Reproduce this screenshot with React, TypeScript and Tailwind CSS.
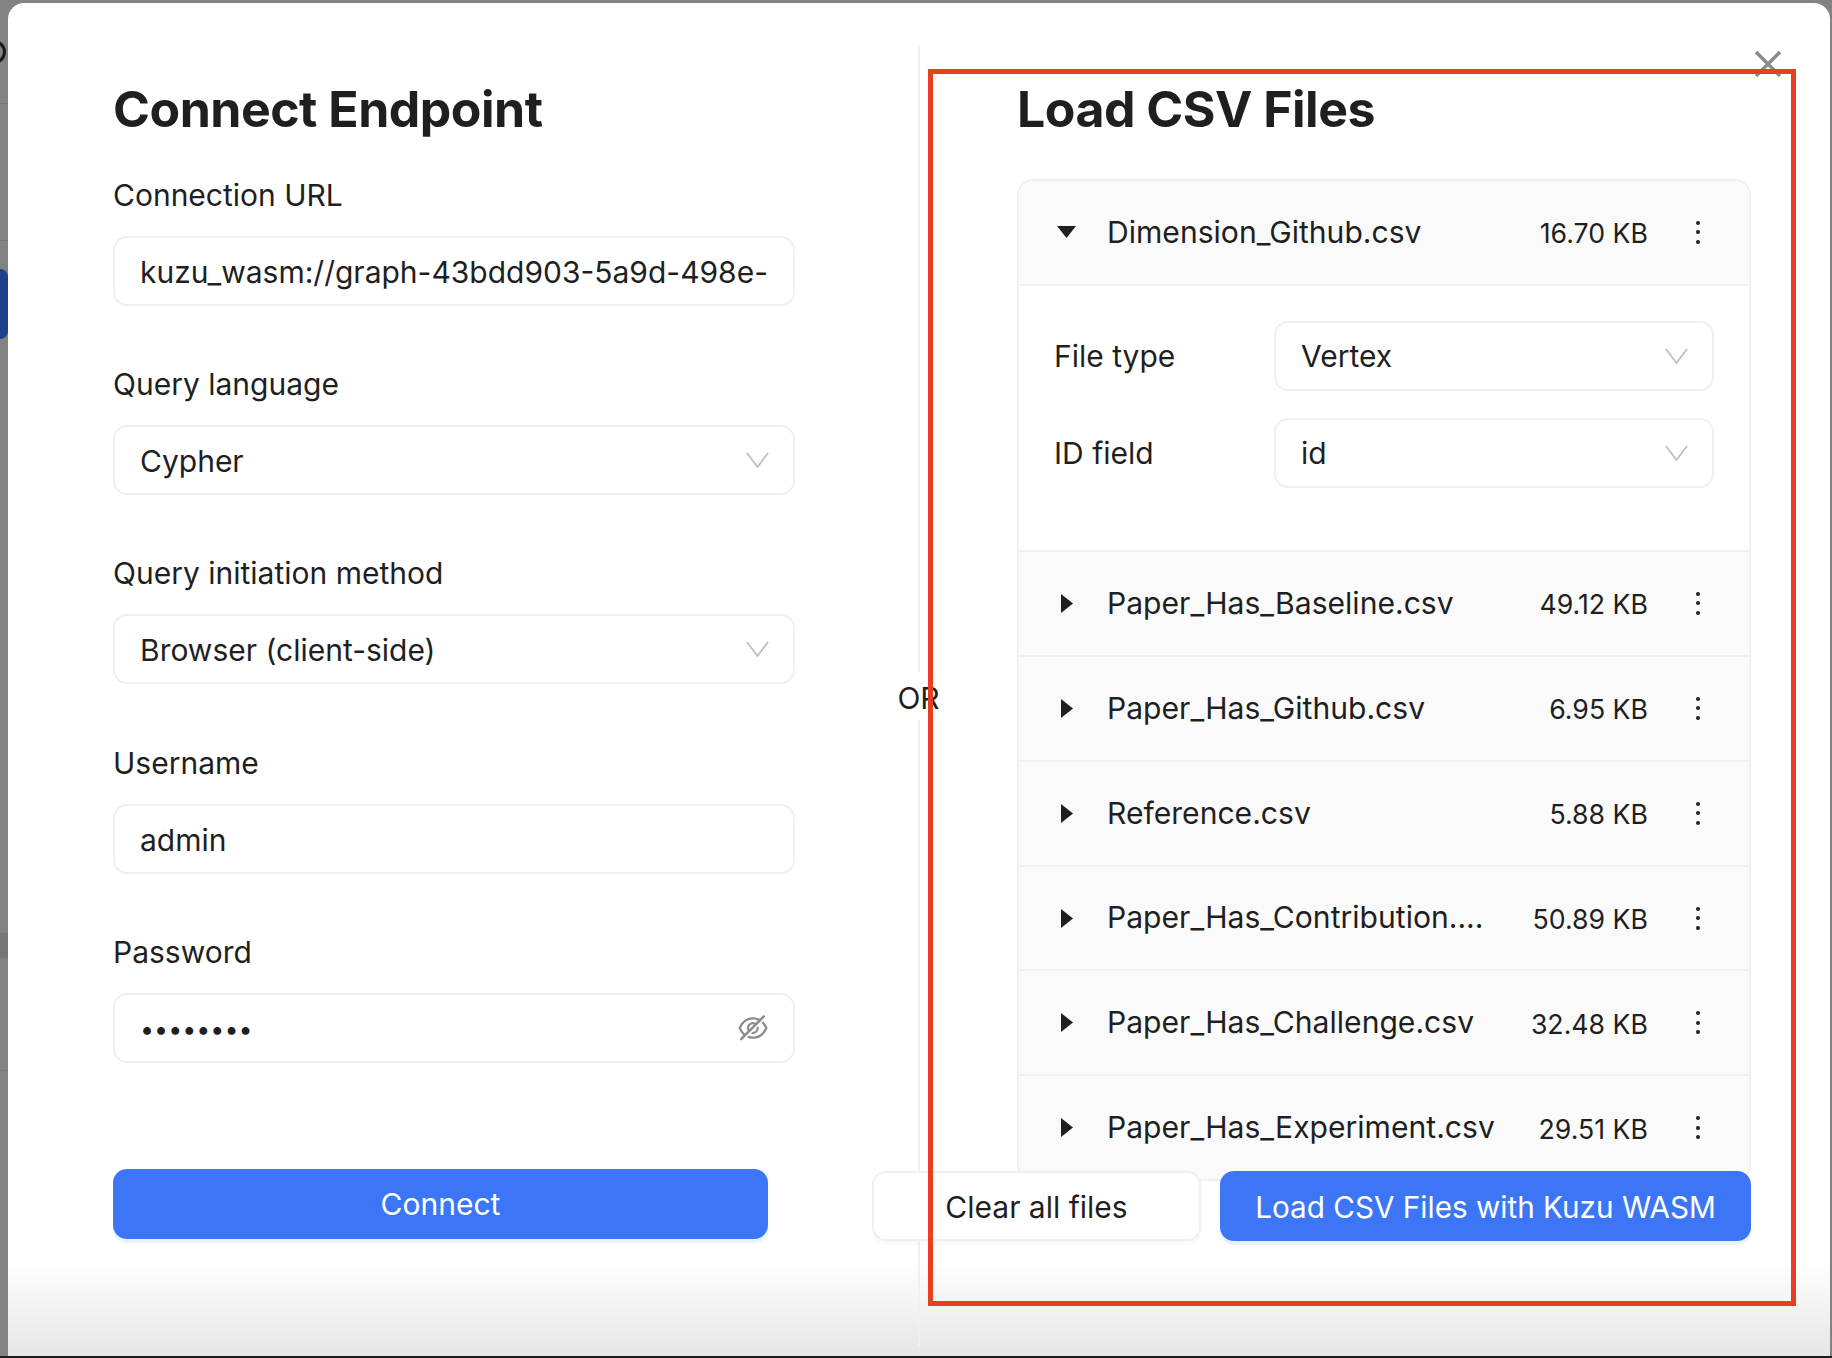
import { AiOutlineEyeInvisible } from "react-icons/ai";

const files = [
  { name: "Paper_Has_Baseline.csv", size: "49.12 KB" },
  { name: "Paper_Has_Github.csv", size: "6.95 KB" },
  { name: "Reference.csv", size: "5.88 KB" },
  { name: "Paper_Has_Contribution....", size: "50.89 KB" },
  { name: "Paper_Has_Challenge.csv", size: "32.48 KB" },
  { name: "Paper_Has_Experiment.csv", size: "29.51 KB" },
];

function Chevron() {
  return (
    <svg width="23" height="16" viewBox="0 0 23 16" fill="none" className="shrink-0">
      <path d="M1 1l10.5 14L22 1" stroke="#bfbfbf" strokeWidth="1.8" />
    </svg>
  );
}

function Kebab() {
  return (
    <div className="flex flex-col gap-[5.5px]">
      <span className="size-[4px] rounded-full bg-[#1f1f1f]" />
      <span className="size-[4px] rounded-full bg-[#1f1f1f]" />
      <span className="size-[4px] rounded-full bg-[#1f1f1f]" />
    </div>
  );
}

function Select({ value }: { value: string }) {
  return (
    <div className="flex h-[70px] items-center justify-between rounded-[14px] border-2 border-[#f0f0f0] bg-white pl-[25px] pr-[24px]">
      <span className="pt-[2px]">{value}</span>
      <Chevron />
    </div>
  );
}

function Field({ label, children }: { label: string; children: React.ReactNode }) {
  return (
    <div className="mb-[58.2px]">
      <div className="mb-[21px] leading-[40px]">{label}</div>
      {children}
    </div>
  );
}

function FileRow({ name, size, open }: { name: string; size: string; open?: boolean }) {
  return (
    <div className="flex h-[104.9px] items-center border-b-2 border-[#f0f0f0] bg-[#fafafa] pl-[38px] pr-[49px]">
      <div className="flex w-[19px] shrink-0 justify-center">
        {open ? (
          <svg width="19" height="12" viewBox="0 0 19 12">
            <path d="M0 0h19L9.5 12z" fill="#1f1f1f" />
          </svg>
        ) : (
          <svg width="12" height="19" viewBox="0 0 12 19">
            <path d="M0 0l12 9.5L0 19z" fill="#1f1f1f" />
          </svg>
        )}
      </div>
      <span className="ml-[31px] flex-1 whitespace-nowrap text-[30.1px]">{name}</span>
      <span className="mr-[48px] whitespace-nowrap pt-[2px] text-[26.7px]">{size}</span>
      <Kebab />
    </div>
  );
}

export default function App() {
  return (
    <div className="relative flex h-[1358px] w-[1832px] flex-col overflow-hidden bg-[#828282] font-['Inter',sans-serif] text-[30px] text-[#1f1f1f]">
      {/* what's left of the page behind the modal */}
      <div className="absolute left-[-18px] top-[40px] size-[24px] rounded-full border-[3px] border-[#1a1a1a]" />
      <div className="absolute left-0 top-[269px] h-[70px] w-[8px] rounded-r-[8px] bg-[#1f3f8a]" />
      <div className="absolute left-0 top-[933px] h-[25px] w-[8px] bg-[#767676]" />
      <div className="absolute left-0 top-[103px] h-px w-[8px] bg-[#777777]" />
      <div className="absolute left-0 top-[240px] h-px w-[8px] bg-[#777777]" />
      <div className="absolute left-0 top-[1070px] h-px w-[8px] bg-[#777777]" />

      <div className="relative ml-[8px] mt-[3px] flex h-[1353px] w-[1822px] rounded-t-[16px] bg-gradient-to-b from-white from-[93%] to-[#e6e6e6]">
        <div className="ml-[105px] w-[682px] shrink-0 pt-[78px]">
          <h1 className="mb-[38px] text-[50px] font-bold leading-[56px] tracking-[-0.01em]">Connect Endpoint</h1>
          <Field label="Connection URL">
            <input
              readOnly
              value="kuzu_wasm://graph-43bdd903-5a9d-498e-b6e2-17c2a1f0d9a4"
              className="h-[70px] w-full rounded-[14px] border-2 border-[#f0f0f0] bg-white pl-[25px] pr-[24px] pt-[2px] outline-none"
            />
          </Field>
          <Field label="Query language">
            <Select value="Cypher" />
          </Field>
          <Field label="Query initiation method">
            <Select value="Browser (client-side)" />
          </Field>
          <Field label="Username">
            <input readOnly value="admin" className="h-[70px] w-full rounded-[14px] border-2 border-[#f0f0f0] bg-white px-[25px] pt-[2px] outline-none" />
          </Field>
          <Field label="Password">
            <div className="flex h-[70px] items-center justify-between rounded-[14px] border-2 border-[#f0f0f0] bg-white pl-[25px] pr-[23px]">
              <input type="password" readOnly value="password" className="min-w-0 flex-1 bg-transparent pt-[3px] text-[25px] outline-none" />
              <AiOutlineEyeInvisible size={34} className="text-[#8c8c8c]" />
            </div>
          </Field>
          <button className="mt-[48px] h-[70px] w-[655px] rounded-[14px] bg-[#3c76f6] pt-[2px] text-white shadow-[0_4px_0_#e8f3ff]">Connect</button>
        </div>

        <div className="ml-[25px] flex w-[197px] shrink-0 flex-col items-center pb-[10px] pt-[42px]">
          <div className="w-[2px] flex-1 bg-[#f0f0f0]" />
          <div className="h-[48px] pt-[5px] leading-[42px]">OR</div>
          <div className="w-[2px] flex-1 bg-[#f0f0f0]" />
        </div>

        <div className="w-[734px] shrink-0 pt-[78px]">
          <h1 className="mb-[42px] text-[50px] font-bold leading-[56px] tracking-[-0.01em]">Load CSV Files</h1>
          <div className="h-[1002px] overflow-hidden rounded-[16px] border-2 border-[#f0f0f0]">
            <FileRow name="Dimension_Github.csv" size="16.70 KB" open />
            <div className="h-[266px] border-b-2 border-[#f0f0f0] bg-white pl-[35px] pr-[35px] pt-[35px]">
              <div className="mb-[27px] flex items-center">
                <span className="w-[220px] shrink-0 pt-[2px]">File type</span>
                <div className="flex-1">
                  <Select value="Vertex" />
                </div>
              </div>
              <div className="flex items-center">
                <span className="w-[220px] shrink-0 pt-[2px]">ID field</span>
                <div className="flex-1">
                  <Select value="id" />
                </div>
              </div>
            </div>
            {files.map((f) => (
              <FileRow key={f.name} name={f.name} size={f.size} />
            ))}
          </div>
          <div className="relative -ml-[145px] -mt-[10px] flex w-[879px] gap-[19px]">
            <button className="h-[70px] w-[329px] rounded-[14px] border-2 border-[#f0f0f0] bg-white pt-[2px] shadow-[0_4px_0_rgba(0,0,0,0.02)]">Clear all files</button>
            <button className="h-[70px] flex-1 rounded-[14px] bg-[#3c76f6] pt-[2px] text-[29.7px] text-white shadow-[0_4px_0_#e8f3ff]">Load CSV Files with Kuzu WASM</button>
          </div>
        </div>

        <svg width="28" height="28" viewBox="0 0 28 28" className="absolute left-[1746px] top-[47px]">
          <path d="M2 2l24 24M26 2L2 26" stroke="#8c8c8c" strokeWidth="3.5" />
        </svg>
      </div>

      <div className="h-[2px] bg-[#1c1c1c]" />

      {/* annotation drawn on top of the screenshot */}
      <div className="pointer-events-none absolute left-[928px] top-[69px] h-[1237px] w-[868px] border-[5px] border-[#ea3e23]" />
    </div>
  );
}
